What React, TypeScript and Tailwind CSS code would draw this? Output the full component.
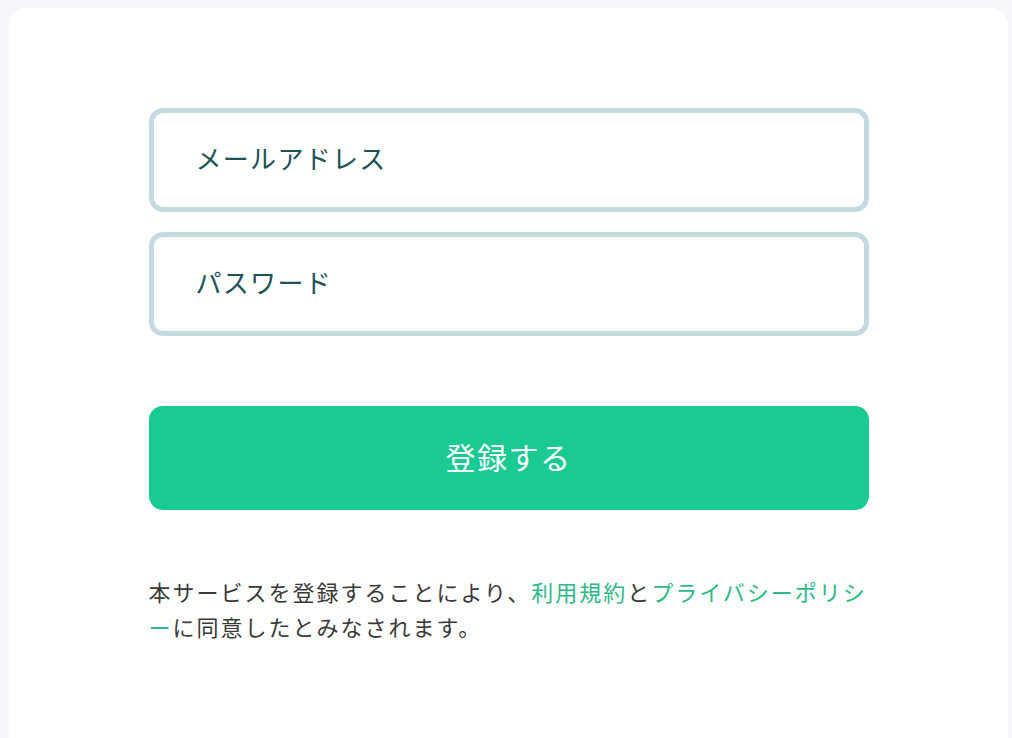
import React from 'react';

export default function App() {
  const [email, setEmail] = React.useState('');
  const [password, setPassword] = React.useState('');

  return (
    <div
      className="min-h-[738px] bg-[#f5f7fb] pt-2 pl-[9px] pr-1 overflow-hidden"
      style={{ fontFamily: '"Noto Sans CJK JP", "Noto Sans", sans-serif' }}
    >
      <div className="bg-white rounded-[18px] min-h-[760px] pt-[100px]">
        <div className="w-[720px] mx-auto">
          <div className="flex flex-col gap-5">
            <input
              type="email"
              value={email}
              onChange={(e) => setEmail(e.target.value)}
              placeholder="メールアドレス"
              className="h-[104px] w-full border-[5px] border-[#c5dade] rounded-[14px] pl-[42px] pb-[5px] text-[26px] tracking-[0.05em] text-[#1d5257] placeholder:text-[#1d5257] focus:outline-none"
            />
            <input
              type="password"
              value={password}
              onChange={(e) => setPassword(e.target.value)}
              placeholder="パスワード"
              className="h-[104px] w-full border-[5px] border-[#c5dade] rounded-[14px] pl-[42px] pb-[5px] text-[26px] tracking-[0.05em] text-[#1d5257] placeholder:text-[#1d5257] focus:outline-none"
            />
          </div>

          <button className="mt-[70px] h-[104px] w-full bg-[#19ca93] rounded-[14px] pb-1 text-white text-[30px] tracking-[0.05em]">
            登録する
          </button>

          <p className="mt-[64px] w-[722px] text-[22px] leading-[35px] tracking-[2px] text-[#3a3a3a]">
            本サービスを登録することにより、
            <a href="#" className="text-[#2db887]">利用規約</a>
            と
            <a href="#" className="text-[#2db887]">プライバシーポリシー</a>
            に同意したとみなされます。
          </p>
        </div>
      </div>
    </div>
  );
}
